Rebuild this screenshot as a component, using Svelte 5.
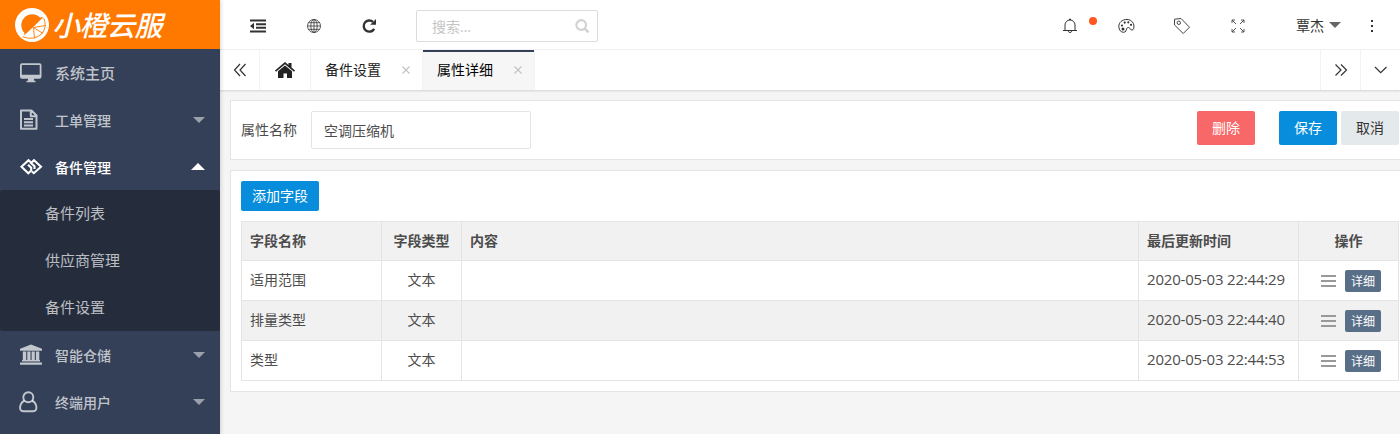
<script lang="ts">
  type MenuItem = { icon: string; label: string; wide?: boolean; open?: boolean; children?: string[] };

  const menu: MenuItem[] = [
    { icon: 'monitor', label: '系统主页', wide: true },
    { icon: 'file', label: '工单管理', children: [] },
    { icon: 'parts', label: '备件管理', open: true, children: ['备件列表', '供应商管理', '备件设置'] },
    { icon: 'bank', label: '智能仓储', children: [] },
    { icon: 'user', label: '终端用户', children: [] },
  ];

  const rows = [
    { name: '适用范围', type: '文本', content: '', updated: '2020-05-03 22:44:29' },
    { name: '排量类型', type: '文本', content: '', updated: '2020-05-03 22:44:40' },
    { name: '类型', type: '文本', content: '', updated: '2020-05-03 22:44:53' },
  ];

  const tabs = ['备件设置', '属性详细'];
  let activeTab = $state('属性详细');
  let attrName = $state('空调压缩机');
</script>

<div class="layout">
  <aside class="side">
    <div class="logo">
      <svg width="34" height="34" viewBox="0 0 34 34">
        <circle cx="17" cy="17" r="17" fill="#fff" />
        <path d="M9.500 25A10 10 0 1 1 25 9.500L28.500 9L9 28z" fill="#ff7800" />
        <path d="M8 28.500L28.300 10.500A13.500 13.500 0 0 1 8 28.500z" fill="#fff" />
        <path d="M18.500 19.500L30.500 17.500M18.500 19.500L28 25.500M18.500 19.500L19.500 30.500M7.500 28.800Q19.500 33 27 25.500Q32.500 18.500 28.700 10.200" fill="none" stroke="#ff7800" stroke-width=".9" />
      </svg>
      <span class="logo-text">小橙云服</span>
    </div>

    <nav>
      {#each menu as item}
        <div class="nav-item" class:open={item.open}>
          <span class="nav-icon">
            {#if item.icon === 'monitor'}
              <svg width="24" height="20" viewBox="0 0 24 20">
                <path d="M3 .3h17.500a2 2 0 0 1 2 2v11.400a2 2 0 0 1-2 2H15v2h1.500v1.500h-9v-1.500H9v-2H3a2 2 0 0 1-2-2V2.300a2 2 0 0 1 2-2zM2.800 2v9.800h17.900V2z" fill="currentColor" fill-rule="evenodd" />
              </svg>
            {:else if item.icon === 'file'}
              <svg width="24" height="22" viewBox="0 0 24 22">
                <path d="M2 1.500h10.500l5 5v13.300H2zM11.800 1.500V7.200h5.700M5 10h9M5 13.200h9M5 16.400h9" fill="none" stroke="currentColor" stroke-width="2" stroke-linejoin="round" />
              </svg>
            {:else if item.icon === 'parts'}
              <svg width="24" height="18" viewBox="0 0 24 18">
                <path d="M11.500 4L9.500 2.200L2.500 8.800L9.300 15.200L12.200 12.500V9.800L9 6.800M13 13.500L14.800 15.200L22 8.800L15 2.200L12 5L15.500 8.200V11" fill="none" stroke="currentColor" stroke-width="2.100" />
              </svg>
            {:else if item.icon === 'bank'}
              <svg width="24" height="22" viewBox="0 0 24 22">
                <path d="M12 .5L23 4.800v1.900H1V4.800zM3.800 7.500h3.400v9H3.800zM8.300 7.500h3.200v9H8.300zM12.600 7.500h3.200v9h-3.200zM16.900 7.500h3.400v9h-3.400zM3 16h18v1.500H3zM1 18.500h22v2.200H1z" fill="currentColor" />
              </svg>
            {:else}
              <svg width="24" height="22" viewBox="0 0 24 22">
                <path d="M5.500 9.800C1.500 10.800.3 16.800 1.700 19Q2.500 20.200 4 20.200H14.500Q16 20.200 16.800 19C18.200 16.800 17 10.800 13 9.800" fill="none" stroke="currentColor" stroke-width="1.900" />
                <circle cx="9.300" cy="6.300" r="5" fill="none" stroke="currentColor" stroke-width="1.900" />
              </svg>
            {/if}
          </span>
          <span class="nav-label" class:wide={item.wide}>{item.label}</span>
          {#if item.children}<i class="arrow"></i>{/if}
        </div>
        {#if item.open}
          <div class="sub">
            {#each item.children ?? [] as child}
              <div class="sub-item">{child}</div>
            {/each}
          </div>
        {/if}
      {/each}
    </nav>
  </aside>

  <div class="main">
    <header class="header">
      <span class="cell">
        <svg width="16" height="14" viewBox="0 0 16 14">
          <path d="M0 1.500h16M6 5.200h10M6 8.800h10M0 12.500h16" stroke="#333" stroke-width="2" />
          <path d="M0 7L4 3.800v6.400z" fill="#333" />
        </svg>
      </span>
      <span class="cell">
        <svg width="14" height="14" viewBox="0 0 14 14" fill="none" stroke="#333" stroke-width=".8">
          <circle cx="7" cy="7" r="6.500" />
          <ellipse cx="7" cy="7" rx="3.200" ry="6.500" />
          <path d="M7 .5v13M.5 7h13M1.400 3.700h11.200M1.400 10.300h11.200" />
        </svg>
      </span>
      <span class="cell refresh">
        <svg width="16" height="16" viewBox="0 0 16 16">
          <path d="M12 3.800A5.600 5.600 0 1 0 13.200 10.800" fill="none" stroke="#333" stroke-width="2.400" />
          <path d="M15 1V6.800H9.200z" fill="#333" />
        </svg>
      </span>
      <div class="search">
        <input type="text" placeholder="搜索..." />
        <svg width="16" height="16" viewBox="0 0 16 16" fill="none" stroke="#d2d2d2" stroke-width="2.200">
          <circle cx="7.200" cy="7" r="4.800" />
          <path d="M10.800 10.600l3.700 3.700" stroke-width="2.600" />
        </svg>
      </div>

      <span class="cell push">
        <svg width="16" height="16" viewBox="0 0 16 16" fill="none" stroke="#333">
          <path d="M1 12.500h14M3 12.500V7a5 5 0 0 1 10 0v5.500M6.200 13.200a1.900 1.900 0 0 0 3.600 0M7.500 2V1h1v1" />
        </svg>
        <i class="dot"></i>
      </span>
      <span class="cell">
        <svg width="17" height="16" viewBox="0 0 17 16" fill="none" stroke="#333">
          <path d="M9 1.500C4 1.500.8 4.500.8 8.500c0 3.500 2.200 5.800 4.700 5.800 2.800 0 2.500-2.200 3.200-3.700 1-2 3.200-.8 3.800.6.500 1.300 2.300 1.200 3.100-.5C17 6 14 1.500 9 1.500z" />
          <g fill="#333" stroke="none">
            <circle cx="4" cy="7.500" r="1.100" /><circle cx="6.700" cy="4.600" r="1.100" />
            <circle cx="10.300" cy="4.300" r="1.100" /><circle cx="13" cy="6.800" r="1.100" />
            <circle cx="5" cy="10.900" r="1.500" />
          </g>
        </svg>
      </span>
      <span class="cell">
        <svg width="18" height="18" viewBox="0 0 18 18" fill="none" stroke="#444">
          <path d="M1.500 2.200L8 1.500l8.500 8.700-6.300 6.300L1.500 8z" stroke-linejoin="round" />
          <circle cx="5.800" cy="5.800" r="1.700" />
        </svg>
      </span>
      <span class="cell">
        <svg width="14" height="14" viewBox="0 0 14 14" fill="none" stroke="#444" stroke-width=".9">
          <path d="M1 4V1h3M10 1h3v3M13 10v3h-3M4 13H1v-3M1 1l4 4M13 1L9 5M13 13L9 9M1 13l4-4" />
        </svg>
      </span>
      <span class="user">覃杰<i class="caret"></i></span>
      <span class="more"><i></i><i></i><i></i></span>
    </header>

    <div class="tabs">
      <span class="tab-ctl">
        <svg width="14" height="14" viewBox="0 0 14 14" fill="none" stroke="#333" stroke-width="1.200"><path d="M7 1L1.500 7L7 13M12.500 1L7 7l5.500 6" /></svg>
      </span>
      <span class="tab-home">
        <svg width="20" height="16" viewBox="0 0 20 16" fill="#222">
          <path d="M10 0l3.500 3V1h3v4.600L20 8.500l-1 1.200-9-7.500-9 7.500-1-1.200z" />
          <path d="M10 3.500l7 5.800V16h-5v-4.500H8.500V16H3V9.300z" />
        </svg>
      </span>
      {#each tabs as tab}
        <button class="tab" class:active={tab === activeTab} onclick={() => (activeTab = tab)}>
          <span>{tab}</span>
          <svg width="8" height="8" viewBox="0 0 8 8" stroke="#c2c2c2" stroke-width="1.100"><path d="M.5.5l7 7M7.500.5l-7 7" /></svg>
        </button>
      {/each}
      <span class="tab-ctl right first">
        <svg width="14" height="14" viewBox="0 0 14 14" fill="none" stroke="#333" stroke-width="1.200"><path d="M1.500 1.500L7 7l-5.500 5.500M7 1.500L12.500 7L7 12.500" /></svg>
      </span>
      <span class="tab-ctl right">
        <svg width="14" height="14" viewBox="0 0 14 14" fill="none" stroke="#333" stroke-width="1.200"><path d="M1 4L6.700 9.700L12.500 4" /></svg>
      </span>
    </div>

    <div class="body">
      <section class="card form-card">
        <label for="attr">属性名称</label>
        <input id="attr" type="text" bind:value={attrName} />
        <div class="actions">
          <button class="btn danger">删除</button>
          <button class="btn primary">保存</button>
          <button class="btn plain">取消</button>
        </div>
      </section>

      <section class="card table-card">
        <button class="btn primary small">添加字段</button>
        <table>
          <colgroup>
            <col class="c-name" /><col class="c-type" /><col /><col class="c-time" /><col class="c-ops" />
          </colgroup>
          <thead>
            <tr>
              <th>字段名称</th>
              <th class="center">字段类型</th>
              <th>内容</th>
              <th>最后更新时间</th>
              <th class="center">操作</th>
            </tr>
          </thead>
          <tbody>
            {#each rows as row}
              <tr>
                <td>{row.name}</td>
                <td class="center">{row.type}</td>
                <td>{row.content}</td>
                <td class="time">{row.updated}</td>
                <td>
                  <div class="ops">
                    <span class="drag"><i></i><i></i><i></i></span>
                    <button class="detail">详细</button>
                  </div>
                </td>
              </tr>
            {/each}
          </tbody>
        </table>
      </section>
    </div>
  </div>
</div>

<style>
  :global(body) {
    overflow: hidden;
  }

  * {
    box-sizing: border-box;
  }

  .layout,
  button,
  input {
    font-family: 'Open Sans', 'Noto Sans CJK SC', sans-serif;
    font-size: 14px;
  }

  .layout {
    display: flex;
    height: 434px;
    overflow: hidden;
    color: #4c4c4c;
    background: #f5f5f5;
  }

  svg {
    display: block;
    flex: none;
  }

  button {
    border: 0;
    padding: 0;
    cursor: pointer;
  }

  /* sidebar */
  .side {
    width: 220px;
    flex: none;
    background: #344058;
    box-shadow: 1px 0 4px rgba(0, 0, 0, 0.15);
    z-index: 1;
  }

  .logo {
    height: 49px;
    display: flex;
    align-items: center;
    gap: 3px;
    padding-left: 15px;
    background: #ff7800;
    color: #fff;
  }

  .logo-text {
    font-size: 28px;
    line-height: 49px;
    font-style: italic;
    font-weight: 500;
    letter-spacing: -0.5px;
    padding-top: 2px;
  }

  .nav-item {
    height: 47px;
    display: flex;
    align-items: center;
    padding: 0 15px 0 19px;
    color: rgba(255, 255, 255, 0.7);
  }

  .nav-item.open {
    color: #fff;
  }

  .nav-icon {
    width: 36px;
  }

  .nav-label {
    flex: 1;
    font-weight: 500;
  }

  .nav-label.wide {
    font-size: 15px;
  }

  .arrow {
    border: 6px solid transparent;
    border-top-color: rgba(255, 255, 255, 0.5);
    border-bottom: 0;
  }

  .open .arrow {
    border-top: 0;
    border-bottom: 7px solid #fff;
    border-left-width: 7px;
    border-right-width: 7px;
  }

  .sub {
    background: #252d3d;
    border-radius: 2px;
  }

  .sub-item {
    height: 47px;
    line-height: 46px;
    padding-left: 45px;
    font-size: 15px;
    color: rgba(255, 255, 255, 0.7);
  }

  /* header */
  .main {
    flex: 1;
    min-width: 0;
  }

  .header {
    height: 50px;
    display: flex;
    align-items: center;
    padding-left: 10px;
    background: #fff;
    border-bottom: 1px solid #f3f3f3;
  }

  .cell {
    width: 56px;
    display: flex;
    justify-content: center;
    padding-top: 3px;
    position: relative;
  }

  .cell.refresh {
    padding: 2px 3px 0 0;
  }

  .push {
    margin-left: auto;
  }

  .dot {
    position: absolute;
    right: 1px;
    top: 2px;
    width: 8px;
    height: 8px;
    border-radius: 50%;
    background: #ff5722;
  }

  .search {
    width: 182px;
    height: 32px;
    margin: 3px 0 0 18px;
    display: flex;
    align-items: center;
    padding: 0 7px 0 15px;
    border: 1px solid #dcdcdc;
    border-radius: 2px;
  }

  .search input {
    flex: 1;
    min-width: 0;
    border: 0;
    outline: 0;
    padding: 0;
    background: none;
  }

  .search input::placeholder {
    color: #c4c4c4;
  }

  .user {
    width: 75px;
    margin-left: 30px;
    display: flex;
    align-items: center;
    gap: 5px;
    color: #333;
  }

  .caret {
    border: 6px solid transparent;
    border-top-color: #666;
    border-bottom: 0;
  }

  .more {
    width: 29px;
    display: flex;
    flex-direction: column;
    gap: 3px;
    padding-top: 3px;
  }

  .more i {
    width: 2px;
    height: 2px;
    background: #333;
  }

  /* page tabs */
  .tabs {
    height: 40px;
    display: flex;
    background: #fff;
    box-shadow: 0 1px 2px rgba(0, 0, 0, 0.15);
  }

  .tab-ctl,
  .tab-home {
    width: 40px;
    display: flex;
    align-items: center;
    justify-content: center;
    border-right: 1px solid #f3f3f3;
  }

  .tab-home {
    width: 51px;
  }

  .tab-ctl.right {
    border-right: 0;
    border-left: 1px solid #f3f3f3;
  }

  .tab-ctl.first {
    margin-left: auto;
  }

  .tab {
    width: 112px;
    display: flex;
    align-items: center;
    justify-content: space-between;
    padding: 0 12px 0 14px;
    background: #fff;
    border-right: 1px solid #f3f3f3;
    color: #222;
  }

  .tab span {
    padding-bottom: 2px;
  }

  .tab.active {
    background: #f6f6f6;
    box-shadow: inset 0 2px #344058;
    color: #000;
  }

  /* content */
  .body {
    width: 1190px;
    padding: 10px 0 0 10px;
  }

  .card {
    background: #fff;
    border: 1px solid #e4e4e4;
    padding: 10px;
    margin-bottom: 10px;
  }

  .form-card {
    height: 60px;
    display: flex;
    align-items: flex-start;
  }

  .form-card label {
    width: 70px;
    line-height: 38px;
  }

  .form-card input {
    width: 220px;
    height: 38px;
    padding: 0 12px;
    border: 1px solid #e4e4e4;
    border-radius: 2px;
    color: #4c4c4c;
    outline: 0;
  }

  .actions {
    display: flex;
    gap: 4px;
    margin-left: auto;
  }

  .btn {
    width: 58px;
    height: 34px;
    padding-bottom: 2px;
    border-radius: 2px;
    color: #fff;
  }

  .danger {
    background: #f96868;
    margin-right: 20px;
  }

  .primary {
    background: #078ddb;
  }

  .plain {
    background: #e4e9ec;
    color: #333;
  }

  .btn.small {
    width: 78px;
    height: 30px;
    display: block;
  }

  .table-card {
    height: 222px;
  }

  table {
    width: 1158px;
    margin-top: 10px;
    table-layout: fixed;
    border-collapse: collapse;
  }

  .c-name { width: 140px; }
  .c-type { width: 80px; }
  .c-time { width: 160px; }
  .c-ops { width: 100px; }

  th,
  td {
    height: 40px;
    padding: 0 8px 2px;
    border: 1px solid #e4e4e4;
    text-align: left;
    line-height: 20px;
  }

  th {
    height: 39px;
    padding-bottom: 0;
    background: #f1f1f1;
    font-weight: 700;
  }

  .center {
    text-align: center;
  }

  tbody tr:nth-child(even) {
    background: #f1f1f1;
  }

  td.time {
    padding-bottom: 4px;
    font-size: 15px;
    letter-spacing: -0.19px;
    white-space: nowrap;
  }

  .ops {
    display: flex;
    align-items: center;
    justify-content: center;
    gap: 9px;
    padding: 2px 0 0 5px;
  }

  .drag {
    width: 15px;
    display: flex;
    flex-direction: column;
    gap: 3px;
  }

  .drag i {
    height: 2px;
    background: #999;
  }

  .detail {
    width: 36px;
    height: 22px;
    border-radius: 2px;
    background: #586f87;
    color: #fff;
    font-size: 12px;
  }
</style>
